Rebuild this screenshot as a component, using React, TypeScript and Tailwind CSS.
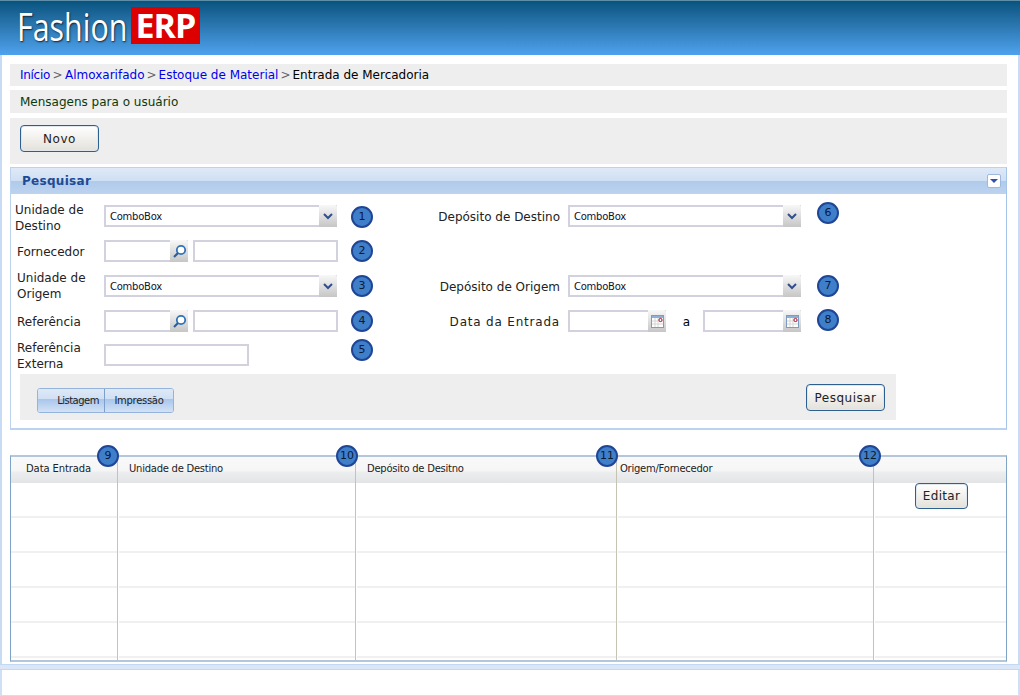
const uiFont = { fontFamily: '"DejaVu Sans", sans-serif' };

function Badge({ n, className = '' }: { n: number; className?: string }) {
  return (
    <div
      className={`flex h-[22px] w-[22px] shrink-0 items-center justify-center rounded-full border-2 border-[#1f4595] bg-[#3f7fca] text-[11px] text-[#0b1a33] ${className}`}
    >
      {n}
    </div>
  );
}

function Chevron() {
  return (
    <svg width="10" height="7" viewBox="0 0 10 7">
      <path d="M1 1 L5 5 L9 1" fill="none" stroke="#2f4f8f" strokeWidth="2" />
    </svg>
  );
}

function Lens() {
  return (
    <svg width="15" height="15" viewBox="0 0 15 15">
      <circle cx="9" cy="6" r="4.2" fill="#fff" stroke="#2f72b8" strokeWidth="1.8" />
      <path d="M6 9 L2 13" stroke="#2a5f9e" strokeWidth="2.2" />
    </svg>
  );
}

function Calendar() {
  return (
    <svg width="13" height="13" viewBox="0 0 13 13">
      <rect x="0.5" y="0.5" width="12" height="12" fill="#fff" stroke="#7d9cc0" />
      <rect x="1" y="1" width="11" height="2" fill="#8fb0d6" />
      <path d="M4 3 V12 M7 3 V12 M1 6 H12 M1 9 H12" stroke="#d5d5d5" />
      <circle cx="9.5" cy="5" r="1.6" fill="#fff" stroke="#a01020" />
    </svg>
  );
}

function Field({ w, icon }: { w: string; icon?: React.ReactNode }) {
  return (
    <div className={`flex h-[22px] shrink-0 border-2 border-[#d2d2de] bg-white ${w}`}>
      <div className="flex-1" />
      {icon && (
        <div className="-my-[2px] -mr-[2px] flex w-[18px] items-center justify-center rounded-tr-[2px] bg-gradient-to-b from-[#f8f8f8] to-[#c6c6c6]">
          {icon}
        </div>
      )}
    </div>
  );
}

function Combo() {
  return (
    <div className="flex h-[22px] w-[233px] shrink-0 items-center border-2 border-[#d2d2de] bg-white pl-[4px] text-[10px] tracking-[-0.25px] text-[#111133]">
      <span className="flex-1">ComboBox</span>
      <div className="-my-[2px] -mr-[2px] flex h-[22px] w-[18px] items-center justify-center rounded-tr-[2px] bg-gradient-to-b from-[#f8f8f8] to-[#c6c6c6]">
        <Chevron />
      </div>
    </div>
  );
}

function ActionButton({ label, className }: { label: string; className: string }) {
  return (
    <button
      className={`rounded-[4px] border border-[#2d5f91] bg-gradient-to-b from-white to-[#e4e1da] text-[12px] text-[#222] shadow-[inset_0_0_0_1px_#dfe6ee] ${className}`}
    >
      {label}
    </button>
  );
}

function Label({ text, className = '' }: { text: string; className?: string }) {
  return <div className={`w-[87px] shrink-0 text-[12px] leading-[16px] text-[#222] ${className}`}>{text}</div>;
}

function RightLabel({ text, className = '' }: { text: string; className?: string }) {
  return <div className={`ml-[29px] mr-[8px] w-[158px] shrink-0 pt-[2px] text-right text-[12px] text-[#222] ${className}`}>{text}</div>;
}

const colWidths = ['w-[107px]', 'w-[238px]', 'w-[261px]', 'w-[257px]', 'flex-1'];
const headers = ['Data Entrada', 'Unidade de Destino', 'Depósito de Desitno', 'Origem/Fornecedor', ''];
const headerPads = ['pl-[15px] tracking-[-0.1px]', 'pl-[11px]', 'pl-[11px]', 'pl-[3px]', ''];

export default function App() {
  return (
    <div className="flex h-[696px] w-[1020px] flex-col overflow-hidden bg-white" style={uiFont}>
      <header className="flex h-[55px] shrink-0 items-start border-t border-[#5f8fa8] bg-gradient-to-b from-[#07547f] to-[#4ea2ee] pl-[17px] pt-[4px]">
        <span
          className="mt-[-1px] w-[112px] origin-left scale-x-[0.8] whitespace-nowrap text-[38px] leading-[44px] text-white [text-shadow:1px_1px_2px_#123]"
          style={{ fontFamily: '"Open Sans", sans-serif' }}
        >
          Fashion
        </span>
        <span
          className="ml-[2px] mt-[2px] flex h-[37px] w-[69px] items-center justify-center bg-[#dd0000] text-[34px] font-bold text-white"
          style={{ fontFamily: '"Open Sans", sans-serif', letterSpacing: '-1px' }}
        >
          ERP
        </span>
      </header>

      <main className="flex flex-1 flex-col border-x-2 border-[#c8dbf5] pl-[8px] pr-[11px] pt-[9px]">
        <div className="flex h-[22px] items-center bg-[#eeeeee] pl-[10px] text-[12px] text-black">
          <span className="tracking-[-0.3px] text-[#0000ee]">Início</span>
          <span className="mx-[2.5px] text-[#666]">&gt;</span>
          <span className="text-[#0000ee]">Almoxarifado</span>
          <span className="mx-[2px] text-[#666]">&gt;</span>
          <span className="text-[#0000ee]">Estoque de Material</span>
          <span className="mx-[2px] text-[#666]">&gt;</span>
          <span>Entrada de Mercadoria</span>
        </div>
        <div className="mt-[4px] flex h-[23px] items-center bg-[#eeeeee] pl-[10px] text-[12px] text-[#0a3a0a]">
          Mensagens para o usuário
        </div>
        <div className="mt-[5px] h-[46px] bg-[#eeeeee] pl-[10px] pt-[7px]">
          <ActionButton label="Novo" className="h-[27px] w-[79px] tracking-[0.5px]" />
        </div>

        <section className="mt-[3px] h-[263px] border border-b-2 border-[#bcd3f0] border-r-[#a5c4ea] bg-white">
          <div className="flex h-[26px] items-center justify-between bg-[linear-gradient(to_bottom,#dfe9f7_0%,#cfdff3_50%,#b0caeb_50%,#bdd3ef_100%)] pl-[11px] pr-[5px]">
            <span className="text-[12px] font-bold tracking-[0.3px] text-[#1f4a94]">Pesquisar</span>
            <div className="flex h-[14px] w-[14px] items-center justify-center rounded-[2px] border border-[#9db9dd] bg-white">
              <div className="h-0 w-0 border-x-[4px] border-t-[4px] border-x-transparent border-t-[#2f52a8]" />
            </div>
          </div>

          <div className="flex h-[234px] flex-col pl-[4px] pt-[11px]">
            <div className="flex h-[22px] items-center">
              <Label text="Unidade de Destino" className="mr-[2px] pt-[3px]" />
              <Combo />
              <Badge n={1} className="ml-[14px] mt-[2px]" />
              <RightLabel text="Depósito de Destino" />
              <Combo />
              <Badge n={6} className="ml-[16px] -mt-[6px]" />
            </div>
            <div className="mt-[13px] flex h-[22px] items-center pl-[2px]">
              <Label text="Fornecedor" className="pt-[2px]" />
              <Field w="w-[84px]" icon={<Lens />} />
              <div className="ml-[5px]">
                <Field w="w-[145px]" />
              </div>
              <Badge n={2} className="ml-[13px]" />
            </div>
            <div className="mt-[13px] flex h-[22px] items-center pl-[2px]">
              <Label text="Unidade de Origem" />
              <Combo />
              <Badge n={3} className="ml-[14px]" />
              <RightLabel text="Depósito de Origem" />
              <Combo />
              <Badge n={7} className="ml-[16px]" />
            </div>
            <div className="mt-[13px] flex h-[22px] items-center pl-[2px]">
              <Label text="Referência" className="pt-[2px]" />
              <Field w="w-[84px]" icon={<Lens />} />
              <div className="ml-[5px]">
                <Field w="w-[145px]" />
              </div>
              <Badge n={4} className="ml-[13px]" />
              <RightLabel text="Data da Entrada" className="tracking-[0.8px]" />
              <Field w="w-[98px]" icon={<Calendar />} />
              <span className="w-[37px] pl-[4px] pt-[2px] text-center text-[12px] text-black">a</span>
              <Field w="w-[98px]" icon={<Calendar />} />
              <Badge n={8} className="ml-[16px] -mt-[2px]" />
            </div>
            <div className="mt-[12px] flex h-[22px] items-center pl-[2px]">
              <Label text="Referência Externa" className="pt-[2px]" />
              <Field w="w-[145px]" />
              <Badge n={5} className="ml-[102px] -mt-[10px]" />
            </div>
            <div className="ml-[5px] mt-[8px] flex h-[46px] w-[876px] items-start justify-between bg-[#eeeeee] pl-[17px] pr-[11px] pt-[10px]">
              <div className="mt-[4px] flex h-[25px] overflow-hidden rounded-[3px] border border-[#94b4dc] text-[10px] text-[#222]">
                <div className="flex w-[66px] items-center justify-end bg-[linear-gradient(to_bottom,#dfe9f7_0%,#cfdff3_45%,#a9c6ec_45%,#d3e2f5_100%)] pr-[5px] tracking-[-0.5px]">
                  Listagem
                </div>
                <div className="flex w-[69px] items-center justify-center border-l border-[#7d9fcc] bg-[linear-gradient(to_bottom,#dfe9f7_0%,#cfdff3_45%,#a9c6ec_45%,#d3e2f5_100%)] tracking-[-0.3px]">
                  Impressão
                </div>
              </div>
              <ActionButton label="Pesquisar" className="h-[27px] w-[79px] tracking-[0.5px]" />
            </div>
          </div>
        </section>

        <section className="relative mt-[25px] h-[207px] border border-t-2 border-b-2 border-[#b3c6da] border-l-[#7ea3c4] border-r-[#7ea3c4] bg-white">
          <Badge n={9} className="absolute left-[86px] top-[-12px] z-10" />
          <Badge n={10} className="absolute left-[325px] top-[-12px] z-10" />
          <Badge n={11} className="absolute left-[585px] top-[-12px] z-10" />
          <Badge n={12} className="absolute left-[848px] top-[-12px] z-10" />
          <div className="flex h-[26px] bg-[linear-gradient(to_bottom,#f9f9fa_0%,#f6f6f7_50%,#ecedef_60%,#e3e4e6_100%)] text-[10px] tracking-[-0.25px] text-[#222]">
            {headers.map((h, i) => (
              <div
                key={i}
                className={`flex shrink-0 items-center pb-[4px] ${colWidths[i]} ${headerPads[i]} ${i < 4 ? 'border-r border-[#c4c3b4]' : ''}`}
              >
                {h}
              </div>
            ))}
          </div>
          <div className="flex h-[177px]">
            {colWidths.map((w, c) => (
              <div key={c} className={`flex shrink-0 flex-col ${w} ${c < 4 ? 'border-r border-[#c4c3b4]' : ''}`}>
                {[0, 1, 2, 3, 4].map((r) => (
                  <div key={r} className={`relative h-[35px] shrink-0 border-b-2 border-[#f0f0f0] ${c > 0 ? 'ml-[1px]' : ''}`}>
                    {c === 4 && r === 0 && (
                      <ActionButton label="Editar" className="absolute left-[40px] top-[0px] h-[26px] w-[53px] tracking-[0.3px]" />
                    )}
                  </div>
                ))}
              </div>
            ))}
          </div>
        </section>
      </main>

      <footer className="h-[32px] shrink-0">
        <div className="h-[6px] border-y border-[#c3d8f3] bg-[#dbe6f7]" />
        <div className="h-[26px] border-x-2 border-b border-[#cfe0f6] bg-white" />
      </footer>
    </div>
  );
}
